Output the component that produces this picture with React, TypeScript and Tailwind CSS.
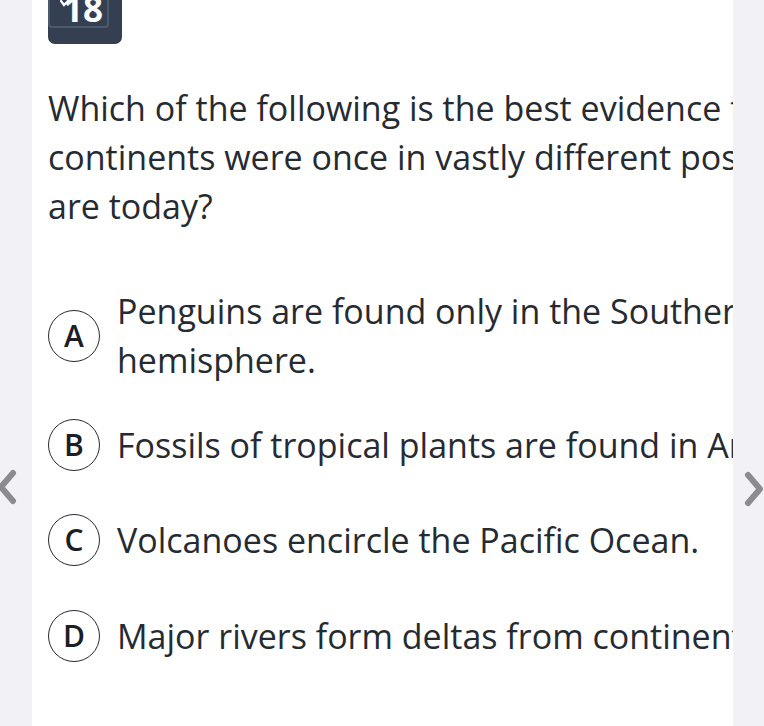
const options = [
  { key: "A", lines: ["Penguins are found only in the Southern", "hemisphere."], mt: "" },
  { key: "B", lines: ["Fossils of tropical plants are found in Antarctica."], mt: "mt-[34px]" },
  { key: "C", lines: ["Volcanoes encircle the Pacific Ocean."], mt: "mt-[43px]" },
  { key: "D", lines: ["Major rivers form deltas from continents."], mt: "mt-[44px]" },
];

function Chevron({ dir }: { dir: "left" | "right" }) {
  return (
    <svg width="22" height="38" viewBox="0 0 22 38" fill="none">
      <path
        d={dir === "left" ? "M17 5 L5 19 L17 33" : "M5 5 L17 19 L5 33"}
        stroke="#8b8b90"
        strokeWidth="6"
        strokeLinecap="round"
        strokeLinejoin="round"
      />
    </svg>
  );
}

export default function App() {
  return (
    <div
      className="relative flex h-[726px] w-[764px] overflow-hidden bg-[#f1f1f6] text-[#262b32]"
      style={{ fontFamily: '"Open Sans", "Noto Sans", sans-serif' }}
    >
      <main className="ml-[32px] w-[701px] overflow-hidden bg-white pl-[16px]">
        {/* question number badge, cut off at the top */}
        <div className="relative h-[44px] w-[74px] overflow-hidden rounded-b-[7px] bg-[#344052]">
          <div className="absolute left-[0px] top-[-6px] flex h-[34px] w-[61px] items-end justify-end rounded-[4px] border-2 border-[#4d596a] pr-[4px] pb-[2px]">
            <span className="text-[35px] font-bold leading-[30px] text-white">18</span>
          </div>
          <svg className="absolute left-[12px] top-[-2px]" width="12" height="9" viewBox="0 0 12 9" fill="none">
            <path d="M1 3 L4 7 L11 0" stroke="white" strokeWidth="2.2" strokeLinecap="round" />
          </svg>
        </div>

        <div className="mt-[40px] text-[34px] leading-[49px] whitespace-nowrap">
          <p>Which of the following is the best evidence that the</p>
          <p>continents were once in vastly different positions than they</p>
          <p>are today?</p>
        </div>

        <div className="mt-[56px] flex flex-col">
          {options.map((o) => (
            <div key={o.key} className={`flex items-center gap-[17px] ${o.mt}`}>
              <div className="flex h-[52px] w-[52px] shrink-0 items-center justify-center rounded-full border-[1.5px] border-[#262b32]">
                <span className="text-3xl leading-none font-semibold text-[#1b1f25]">{o.key}</span>
              </div>
              <div className="text-[34px] leading-[49px] whitespace-nowrap">
                {o.lines.map((l) => (
                  <p key={l}>{l}</p>
                ))}
              </div>
            </div>
          ))}
        </div>
      </main>

      <div className="absolute left-[-4px] top-[468px]">
        <Chevron dir="left" />
      </div>
      <div className="absolute left-[743px] top-[470px]">
        <Chevron dir="right" />
      </div>
    </div>
  );
}
